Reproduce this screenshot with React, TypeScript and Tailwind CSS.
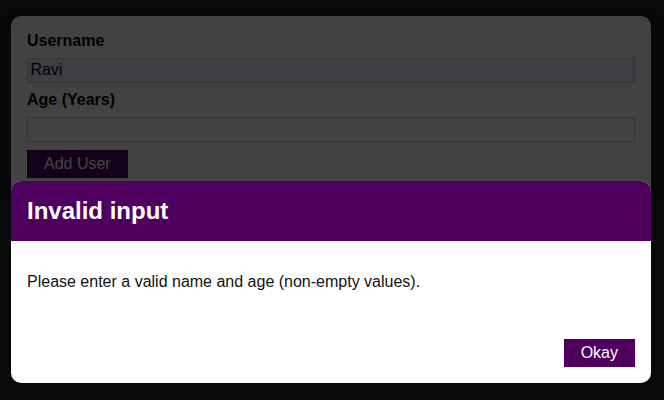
import React from "react";

export default function App() {
  return (
    <div
      className="relative w-[664px] h-[400px] overflow-hidden bg-[#1f1f1f] text-black"
      style={{ fontFamily: '"Liberation Sans", Arial, sans-serif' }}
    >
      <div className="ml-[11px] mt-[16px] w-[640px] rounded-[10px] bg-white p-4 shadow-[0_2px_8px_rgba(0,0,0,0.26)]">
        <label className="block font-bold text-[16px] leading-[18.4px] mb-2">Username</label>
        <input
          readOnly
          value="Ravi"
          className="block w-full border border-[#ccc] bg-[#e8f0fe] px-[2.4px] py-[2px] text-[16px] leading-[18.4px] mb-2 outline-none"
        />
        <label className="block font-bold text-[16px] leading-[18.4px] mb-2">Age (Years)</label>
        <input
          readOnly
          value=""
          className="block w-full border border-[#ccc] bg-white px-[2.4px] py-[2px] text-[16px] leading-[18.4px] mb-2 outline-none"
        />
        <button className="border border-[#4f005f] bg-[#4f005f] text-white px-4 py-1 text-[16px] leading-[18.4px]">
          Add User
        </button>
      </div>

      <div className="absolute inset-0 bg-[rgba(0,0,0,0.74)]" />

      <div className="absolute left-[11px] top-[181px] w-[640px] rounded-[10px] overflow-hidden bg-white">
        <header className="bg-[#4f005f] p-4">
          <h2 className="m-0 text-white font-bold text-[24px] leading-[27.6px]">Invalid input</h2>
        </header>
        <div className="p-4">
          <p className="my-4 text-[16px] leading-[18.4px] text-[#111]">
            Please enter a valid name and age (non-empty values).
          </p>
        </div>
        <footer className="flex justify-end p-4">
          <button className="border border-[#4f005f] bg-[#4f005f] text-white px-4 py-1 text-[16px] leading-[18.4px]">
            Okay
          </button>
        </footer>
      </div>
    </div>
  );
}
